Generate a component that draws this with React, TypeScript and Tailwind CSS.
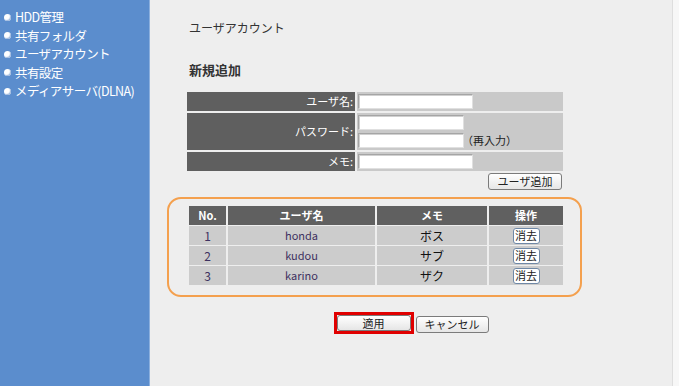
const jp = { fontFamily: '"Noto Sans CJK JP", "Liberation Sans", sans-serif' };

const menu = ['HDD管理', '共有フォルダ', 'ユーザアカウント', '共有設定', 'メディアサーバ(DLNA)'];

const users = [
  { no: '1', name: 'honda', memo: 'ボス' },
  { no: '2', name: 'kudou', memo: 'サブ' },
  { no: '3', name: 'karino', memo: 'ザク' },
];

function TextBox({ w }: { w: string }) {
  return (
    <div
      className={`${w} h-[15px] bg-white border border-[#a5a5a5] border-r-[#e0e0e0] border-b-[#e0e0e0] shadow-[inset_1px_1px_0_#d0d0d0]`}
    />
  );
}

function Btn({ children, className = '' }: { children: React.ReactNode; className?: string }) {
  return (
    <button
      className={`flex items-center justify-center bg-gradient-to-b from-white to-[#e6e6e6] border border-[#7b7b7b] rounded-[3px] text-[11px] text-[#222] ${className}`}
    >
      {children}
    </button>
  );
}

export default function App() {
  return (
    <div className="w-[679px] h-[386px] flex bg-white" style={jp}>
      <div className="w-[150px] shrink-0 bg-[#5b8dcd] border-r border-[#8cb0de] pt-[8px]">
        {menu.map((m) => (
          <div key={m} className="flex items-center h-[18.5px] text-[12.5px] tracking-[-0.6px] text-white">
            <span className="ml-[4px] mr-[4px] w-[7px] h-[7px] rounded-full bg-white shadow-[inset_-1px_-1px_1px_#9bb6dc]" />
            <span className="leading-none">{m}</span>
          </div>
        ))}
      </div>

      <div className="w-[522px] shrink-0 bg-[#eeeeee] flex flex-col pl-[37px] pt-[20px]">
        <div className="ml-[2px] text-[12px] leading-[16px] text-[#333]">ユーザアカウント</div>
        <div className="ml-[2px] mt-[25px] text-[13px] leading-[18px] font-bold text-[#333]">新規追加</div>

        <div className="mt-[13px] w-[376px] grid grid-cols-[168px_206px] gap-[2px]">
          <div className="h-[19px] bg-[#5f5f5f] flex items-center justify-end pr-[2px] text-[11px] text-white">ユーザ名:</div>
          <div className="h-[19px] bg-[#c9c9c9] flex items-center pl-[1px]">
            <TextBox w="w-[115px]" />
          </div>
          <div className="h-[37px] bg-[#5f5f5f] flex items-center justify-end pr-[2px] text-[11px] text-white">パスワード:</div>
          <div className="h-[37px] bg-[#c9c9c9] flex flex-col justify-center gap-[2px] pl-[1px]">
            <TextBox w="w-[106px]" />
            <div className="flex items-center">
              <TextBox w="w-[106px]" />
              <span className="text-[11px] text-[#222] -ml-[2px]">（再入力）</span>
            </div>
          </div>
          <div className="h-[19px] bg-[#5f5f5f] flex items-center justify-end pr-[2px] text-[11px] text-white">メモ:</div>
          <div className="h-[19px] bg-[#c9c9c9] flex items-center pl-[1px]">
            <TextBox w="w-[115px]" />
          </div>
        </div>

        <div className="w-[376px] flex justify-end mt-[2px]">
          <Btn className="w-[74px] h-[17px] mr-[1px]">ユーザ追加</Btn>
        </div>

        <div className="-ml-[20px] mt-[7px] w-[415px] h-[100px] border-2 border-[#f4a04e] rounded-[14px] pt-[7px] pl-[20px]">
          <div className="w-[374px] grid grid-cols-[37px_147px_110px_74px] gap-x-[2px] gap-y-[1px] text-[11px]">
            {['No.', 'ユーザ名', 'メモ', '操作'].map((h) => (
              <div key={h} className="h-[19px] bg-[#606060] text-white font-bold flex items-center justify-center">
                {h}
              </div>
            ))}
            {users.map((u) => (
              <div key={u.no} className="contents">
                <div className="h-[19px] bg-[#cccccc] flex items-center justify-center text-[#3d3160] text-[12px]">{u.no}</div>
                <div className="h-[19px] bg-[#cccccc] flex items-center justify-center text-[#3d3160]">{u.name}</div>
                <div className="h-[19px] bg-[#cccccc] flex items-center justify-center text-[#111] text-[12px]">{u.memo}</div>
                <div className="h-[19px] bg-[#cccccc] flex items-center justify-center">
                  <button className="w-[27px] h-[16px] bg-white border border-[#6f88a6] rounded-[3px] text-[11px] leading-none text-[#222]">
                    消去
                  </button>
                </div>
              </div>
            ))}
          </div>
        </div>

        <div className="mt-[15px] flex items-start justify-center pr-[37px]">
          <div className="border-[3px] border-[#e00000]">
            <Btn className="w-[74px] h-[16px]">適用</Btn>
          </div>
          <Btn className="w-[73px] h-[17px] ml-[2px] mt-[4px]">キャンセル</Btn>
        </div>
      </div>

      <div className="flex-1 bg-[#f7f7f7] border-l border-[#dedede]" />
    </div>
  );
}
